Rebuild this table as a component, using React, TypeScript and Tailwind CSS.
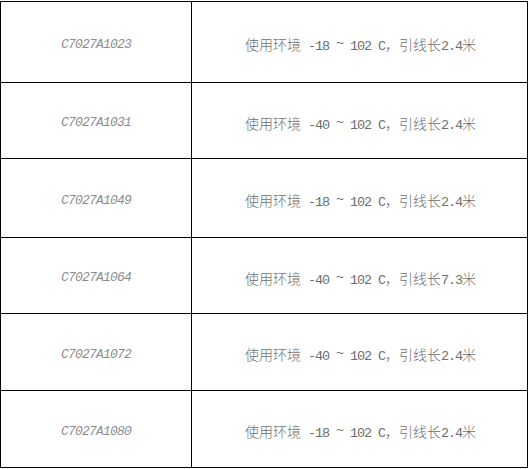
import React from 'react';

const rows = [
  { code: 'C7027A1023', low: '-18', len: '2.4', h: 'h-[81px]' },
  { code: 'C7027A1031', low: '-40', len: '2.4', h: 'h-[76px]' },
  { code: 'C7027A1049', low: '-18', len: '2.4', h: 'h-[79px]' },
  { code: 'C7027A1064', low: '-40', len: '7.3', h: 'h-[76px]' },
  { code: 'C7027A1072', low: '-40', len: '2.4', h: 'h-[77px]' },
  { code: 'C7027A1080', low: '-18', len: '2.4', h: 'h-[77px]' },
];

const cjk = "font-['Noto_Sans_CJK_SC',sans-serif] font-light";
const mono = "font-['Liberation_Mono','DejaVu_Sans_Mono',monospace] font-normal text-[13.5px] tracking-[-1.1px]";

export default function App() {
  return (
    <div className="w-[530px] h-[469px] bg-white pt-[1px]">
      <div className="w-[528px] border-t border-l border-r border-black">
        {rows.map((r) => (
          <div key={r.code} className={`flex border-b border-black ${r.h}`}>
            <div className="w-[191px] border-r border-black flex items-center justify-center pt-[5px]">
              <span className="font-['Liberation_Mono',monospace] italic text-[13px] tracking-[-0.8px] text-[#8c8c8c]">
                {r.code}
              </span>
            </div>
            <div className="flex-1 flex items-center justify-center pt-[7px] pl-[2px]">
              <span className={`${cjk} text-[14px] text-[#6e6e6e] whitespace-pre leading-none`}>
                使用环境<span className={mono}> {r.low} </span>
                <span className={`${mono} relative -top-[3px]`}>~</span>
                <span className={mono}> 102 C</span>，引线长<span className={mono}>{r.len}</span>米
              </span>
            </div>
          </div>
        ))}
      </div>
    </div>
  );
}
